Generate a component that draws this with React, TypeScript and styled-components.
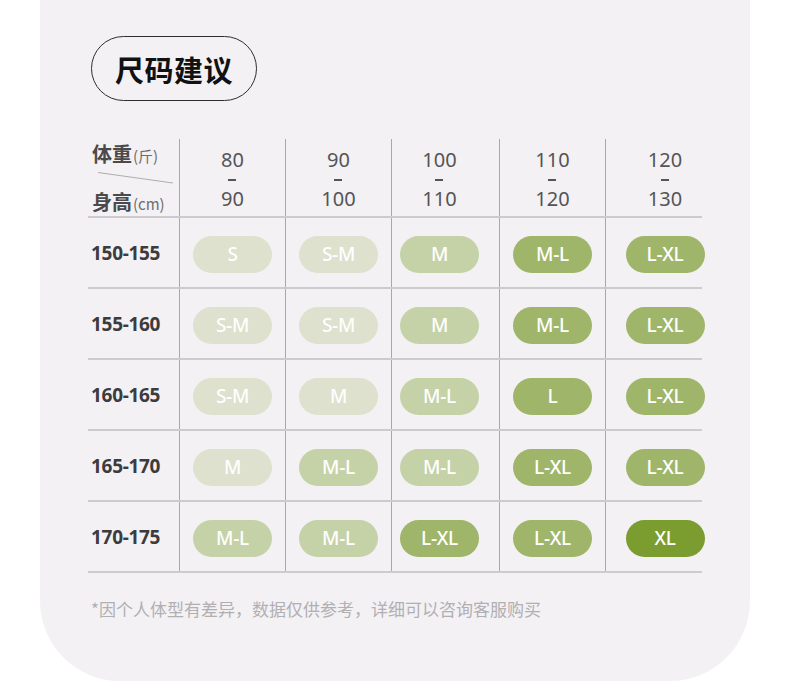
import React from 'react'
import styled, { createGlobalStyle } from 'styled-components'

const GlobalStyle = createGlobalStyle`
    body {
        margin: 0;
        background: #ffffff;
        font-family: "Noto Sans", "Noto Sans CJK SC", sans-serif;
    }
`

type Level = 1 | 2 | 3 | 4

const pillColors: Record<Level, string> = {
    1: '#dde1cd',
    2: '#c5d2a7',
    3: '#9fb66a',
    4: '#7b9c2f',
}

const columns = [
    { from: '80', to: '90', offset: 0 },
    { from: '90', to: '100', offset: 0 },
    { from: '100', to: '110', offset: -6 },
    { from: '110', to: '120', offset: 0 },
    { from: '120', to: '130', offset: 11 },
]

const rows: { label: string, cells: [string, Level][] }[] = [
    { label: '150-155', cells: [['S', 1], ['S-M', 1], ['M', 2], ['M-L', 3], ['L-XL', 3]] },
    { label: '155-160', cells: [['S-M', 1], ['S-M', 1], ['M', 2], ['M-L', 3], ['L-XL', 3]] },
    { label: '160-165', cells: [['S-M', 1], ['M', 1], ['M-L', 2], ['L', 3], ['L-XL', 3]] },
    { label: '165-170', cells: [['M', 1], ['M-L', 2], ['M-L', 2], ['L-XL', 3], ['L-XL', 3]] },
    { label: '170-175', cells: [['M-L', 2], ['M-L', 2], ['L-XL', 3], ['L-XL', 3], ['XL', 4]] },
]

function App() {
    return (
        <>
            <GlobalStyle />
            <Card>
                <Title>尺码建议</Title>
                <Table>
                    <HeaderRow>
                        <Corner>
                            <CornerLabel>体重<Unit>(斤)</Unit></CornerLabel>
                            <Diagonal viewBox="0 0 76 12" width="76" height="12">
                                <line x1="0" y1="0.5" x2="75" y2="11" stroke="#9c9a9d" strokeWidth="0.8" />
                            </Diagonal>
                            <CornerLabel>身高<Unit>(cm)</Unit></CornerLabel>
                        </Corner>
                        {columns.map((c, i) => (
                            <Cell key={i}>
                                <Range $offset={c.offset}>
                                    <span>{c.from}</span>
                                    <Dash aria-label="-" />
                                    <span>{c.to}</span>
                                </Range>
                            </Cell>
                        ))}
                    </HeaderRow>
                    {rows.map(r => (
                        <Row key={r.label}>
                            <RowLabel>{r.label}</RowLabel>
                            {r.cells.map(([size, level], i) => (
                                <Cell key={i}>
                                    <Pill $level={level} $offset={columns[i].offset}>{size}</Pill>
                                </Cell>
                            ))}
                        </Row>
                    ))}
                </Table>
                <Note>*因个人体型有差异，数据仅供参考，详细可以咨询客服购买</Note>
            </Card>
        </>
    )
}

const Card = styled.div`
    box-sizing: border-box;
    margin-left: 40px;
    width: 710px;
    height: 681px;
    padding: 36px 0 0 48px;
    background: #f3f1f4;
    border-radius: 0 0 80px 80px;
`

const Title = styled.div`
    box-sizing: border-box;
    margin-left: 3px;
    width: 166px;
    height: 65px;
    display: flex;
    align-items: center;
    justify-content: center;
    border: 1.5px solid #2e2e2e;
    border-radius: 33px;
    font-family: "Noto Sans CJK SC", sans-serif;
    font-size: 29px;
    font-weight: 700;
    color: #111111;
    letter-spacing: 0.5px;
`

const Table = styled.div`
    margin-top: 38px;
    width: 614px;
`

const gridCols = `
    display: grid;
    grid-template-columns: 91px 106px 106px 108px 106px 97px;
    border-bottom: 2px solid #cdcbce;
    box-sizing: border-box;
`

const HeaderRow = styled.div`
    ${gridCols}
    height: 79px;
`

const Row = styled.div`
    ${gridCols}
    height: 71px;
`

const Cell = styled.div`
    display: flex;
    align-items: center;
    justify-content: center;
    border-left: 1px solid #a9a7aa;
`

const Corner = styled.div`
    display: flex;
    flex-direction: column;
    justify-content: center;
    padding-left: 4px;
    padding-top: 2px;
`

const CornerLabel = styled.div`
    font-family: "Noto Sans CJK SC", sans-serif;
    font-size: 20px;
    font-weight: 700;
    color: #4a494b;
    line-height: 24px;
    display: flex;
    align-items: baseline;
`

const Unit = styled.span`
    font-size: 15px;
    font-weight: 400;
    color: #6d6c6e;
    margin-left: 1px;
`

const Diagonal = styled.svg`
    display: block;
    margin: 4px 0 6px 6px;
`

const Range = styled.div<{ $offset: number }>`
    display: flex;
    flex-direction: column;
    align-items: center;
    transform: translateX(${p => p.$offset}px);
    font-size: 20px;
    color: #555456;
    line-height: 20px;
    margin-top: 4px;
`

const Dash = styled.span`
    display: block;
    width: 8px;
    height: 2px;
    margin: 9px 0 8px;
    background: #555456;
`

const RowLabel = styled.div`
    display: flex;
    align-items: center;
    padding-left: 3px;
    font-size: 19px;
    font-weight: 700;
    color: #3c3b3d;
    letter-spacing: -0.3px;
`

const Pill = styled.div<{ $level: Level, $offset: number }>`
    width: 79px;
    height: 37px;
    margin-top: 3px;
    border-radius: 19px;
    background: ${p => pillColors[p.$level]};
    color: #ffffff;
    font-size: 19px;
    font-weight: 500;
    display: flex;
    align-items: center;
    justify-content: center;
    transform: translateX(${p => p.$offset}px);
    letter-spacing: -0.3px;
`

const Note = styled.div`
    margin-top: 23px;
    margin-left: 3px;
    font-family: "Noto Sans CJK SC", sans-serif;
    font-size: 17px;
    color: #b1afb2;
`

export default App
